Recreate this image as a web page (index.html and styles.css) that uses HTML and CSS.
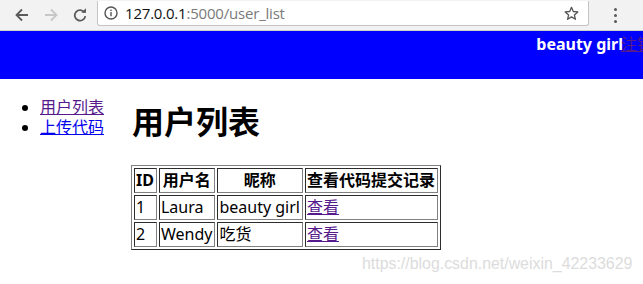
FILE: index.html
```html
<!DOCTYPE html>
<html lang="zh-CN">
<head>
    <meta charset="UTF-8">
    <title>用户列表</title>
    <link rel="stylesheet" href="styles.css">
</head>
<body>
    <div class="toolbar">
        <div class="nav-buttons">
            <svg class="nav-icon" width="14" height="14" viewBox="0 0 14 14"><path d="M13 7H2M7 1.5L1.5 7 7 12.5" fill="none" stroke="#5a5a5a" stroke-width="1.8"/></svg>
            <svg class="nav-icon" width="14" height="14" viewBox="0 0 14 14"><path d="M1 7h11M7 1.5L12.5 7 7 12.5" fill="none" stroke="#c6c6c6" stroke-width="1.8"/></svg>
            <svg class="nav-icon" width="14" height="14" viewBox="0 0 14 14"><path d="M11.6 4.6A5.3 5.3 0 1 0 12.3 8.2" fill="none" stroke="#5a5a5a" stroke-width="1.8"/><path d="M8.4 4.8h4.6V0.2z" fill="#5a5a5a"/></svg>
        </div>
        <div class="omnibox">
            <svg class="info-icon" width="14" height="14" viewBox="0 0 14 14"><circle cx="7" cy="7" r="6" fill="none" stroke="#555" stroke-width="1.4"/><rect x="6.3" y="6" width="1.4" height="4.2" fill="#555"/><rect x="6.3" y="3.6" width="1.4" height="1.4" fill="#555"/></svg>
            <span class="url"><span class="host">127.0.0.1</span>:5000/user_list</span>
            <svg class="star" width="15" height="15" viewBox="0 0 15 15"><path d="M7.5 1.3l1.8 4.2 4.5.4-3.4 3 1 4.4-3.9-2.4-3.9 2.4 1-4.4-3.4-3 4.5-.4z" fill="none" stroke="#555" stroke-width="1.3" stroke-linejoin="round"/></svg>
        </div>
        <div class="menu-dots"><i></i><i></i><i></i></div>
    </div>

    <header class="topbar">
        <div class="user-box"><span class="username">beauty girl</span><a href="#">注销</a></div>
    </header>

    <div class="layout">
        <ul class="sidebar">
            <li><a class="visited" href="#">用户列表</a></li>
            <li><a href="#">上传代码</a></li>
        </ul>
        <main class="content">
            <h1>用户列表</h1>
            <table class="user-table" border="1">
                <tr>
                    <th>ID</th>
                    <th>用户名</th>
                    <th>昵称</th>
                    <th>查看代码提交记录</th>
                </tr>
                <tr>
                    <td>1</td>
                    <td>Laura</td>
                    <td>beauty girl</td>
                    <td><a class="visited" href="#">查看</a></td>
                </tr>
                <tr>
                    <td>2</td>
                    <td>Wendy</td>
                    <td>吃货</td>
                    <td><a class="visited" href="#">查看</a></td>
                </tr>
            </table>
        </main>
    </div>

    <div class="watermark">https://blog.csdn.net/weixin_42233629</div>
</body>
</html>
```

FILE: styles.css
```css
body {
    margin: 0;
    padding: 0;
    background: #fff;
    font-family: "Noto Sans", "Noto Sans CJK SC", sans-serif;
    font-size: 16px;
    width: 643px;
    height: 284px;
    overflow: hidden;
    position: relative;
}
.toolbar {
    height: 30px;
    background: #f2f2f2;
    border-bottom: 1px solid #cfcfcf;
    display: flex;
    align-items: flex-start;
}
.nav-buttons {
    display: flex;
    gap: 15px;
    padding: 8px 0 0 15px;
    width: 82px;
}
.omnibox {
    margin-top: 1px;
    width: 492px;
    height: 25px;
    background: #fff;
    border: 1px solid #c4c4c4;
    border-top: none;
    border-radius: 0 0 3px 3px;
    display: flex;
    align-items: center;
    padding: 0 0 0 6px;
    box-sizing: border-box;
}
.info-icon {
    margin-right: 7px;
}
.url {
    font-family: "Open Sans", "Noto Sans", sans-serif;
    font-size: 15px;
    color: #7a7a7a;
    letter-spacing: -0.2px;
    flex: 1;
}
.host {
    color: #111;
}
.star {
    margin-right: 9px;
}
.menu-dots {
    display: flex;
    flex-direction: column;
    gap: 3px;
    padding: 8px 0 0 25px;
}
.menu-dots i {
    display: block;
    width: 3px;
    height: 3px;
    background: #5a5a5a;
    border-radius: 50%;
}
.topbar {
    height: 48px;
    background: #0000ff;
    display: flex;
    justify-content: flex-end;
    overflow: hidden;
}
.user-box {
    margin-right: -10px;
    padding-top: 2px;
    white-space: nowrap;
    line-height: 22px;
}
.username {
    color: #fff;
    font-weight: bold;
    margin-right: -2px;
}
.user-box a {
    color: #551a8b;
}
.layout {
    display: flex;
    align-items: flex-start;
}
.sidebar {
    margin: 18px 0 0 0;
    padding-left: 40px;
    width: 64px;
    line-height: 20px;
}
.sidebar a {
    color: #0000ee;
}
a.visited {
    color: #551a8b;
}
.content {
    padding-left: 27px;
}
.content h1 {
    font-size: 32px;
    margin: 22px 0 22px 1px;
    line-height: 42px;
}
.user-table {
    border-color: #808080;
    line-height: 21px;
}
.user-table th,
.user-table td {
    padding: 1px 2px 1px 1px;
    border-color: #808080;
}
.user-table a {
    color: #551a8b;
}
.watermark {
    position: absolute;
    left: 362px;
    top: 255px;
    font-family: "Liberation Sans", Arial, sans-serif;
    font-size: 15.9px;
    color: #dcdcdc;
}
```
